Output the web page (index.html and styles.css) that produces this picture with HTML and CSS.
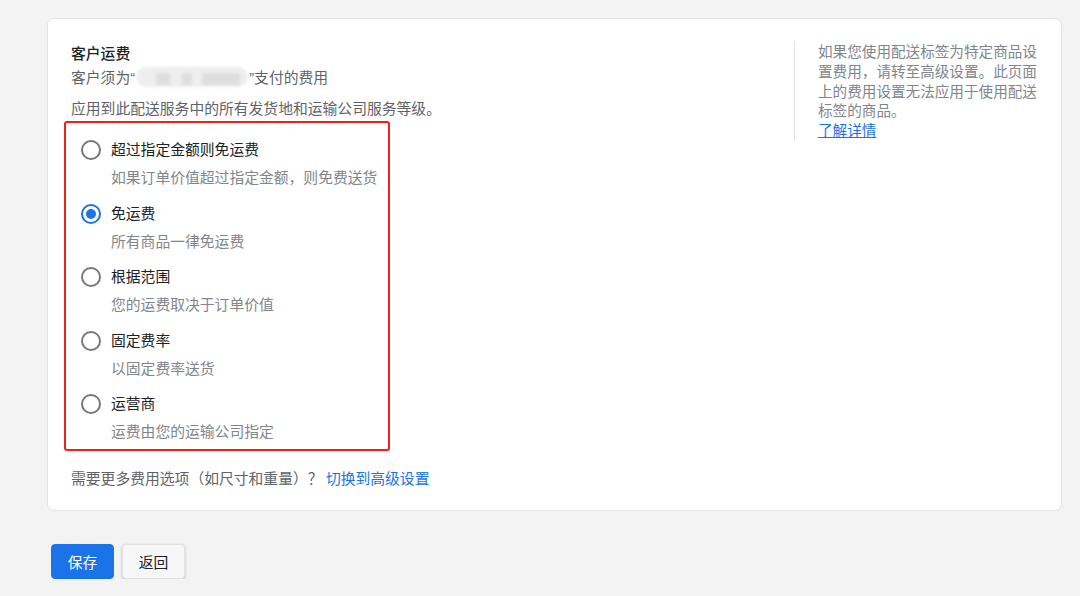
FILE: index.html
```html
<!DOCTYPE html>
<html lang="zh-CN">
<head>
    <meta charset="UTF-8">
    <title>客户运费</title>
    <link rel="stylesheet" href="styles.css">
</head>
<body>
    <div class="card">
        <div class="main">
            <h3 class="title">客户运费</h3>
            <p class="subtitle">客户须为<span class="q">“</span><span class="blur"><i></i><i></i><i></i></span><span class="q">”</span>支付的费用</p>
            <p class="note">应用到此配送服务中的所有发货地和运输公司服务等级。</p>

            <div class="options">
                <label class="option">
                    <span class="radio"></span>
                    <span class="text">
                        <span class="label">超过指定金额则免运费</span>
                        <span class="desc">如果订单价值超过指定金额，则免费送货</span>
                    </span>
                </label>
                <label class="option">
                    <span class="radio checked"></span>
                    <span class="text">
                        <span class="label">免运费</span>
                        <span class="desc">所有商品一律免运费</span>
                    </span>
                </label>
                <label class="option">
                    <span class="radio"></span>
                    <span class="text">
                        <span class="label">根据范围</span>
                        <span class="desc">您的运费取决于订单价值</span>
                    </span>
                </label>
                <label class="option">
                    <span class="radio"></span>
                    <span class="text">
                        <span class="label">固定费率</span>
                        <span class="desc">以固定费率送货</span>
                    </span>
                </label>
                <label class="option">
                    <span class="radio"></span>
                    <span class="text">
                        <span class="label">运营商</span>
                        <span class="desc">运费由您的运输公司指定</span>
                    </span>
                </label>
            </div>

            <p class="more">需要更多费用选项（如尺寸和重量）？ <a href="#">切换到高级设置</a></p>
        </div>

        <aside class="aside">
            如果您使用配送标签为特定商品设置费用，请转至高级设置。此页面上的费用设置无法应用于使用配送标签的商品。<br>
            <a href="#" class="learn">了解详情</a>
        </aside>
    </div>

    <div class="actions">
        <button class="btn primary">保存</button>
        <button class="btn">返回</button>
    </div>
</body>
</html>
```

FILE: styles.css
```css
* { box-sizing: border-box; margin: 0; padding: 0; }
body { background: #f3f3f3; font-family: "Noto Sans CJK SC", "Liberation Sans", sans-serif; font-size: 14.8px; color: #202124; }

.card { display: flex; margin: 18px 18px 0 47px; background: #fff; border: 1px solid #e3e3e3; border-radius: 7px;
        padding: 24px 18px 22px 23px; }
.main { flex: 1; }
.title { font-size: 14.8px; font-weight: 500; line-height: 20px; color: #202124; }
.subtitle { line-height: 20px; margin-top: 4px; color: #5f6368; }
.q { font-family: "Liberation Sans", sans-serif; }
.blur { display: inline-block; vertical-align: middle; width: 112px; height: 20px; margin: -3px 1px 0; background: #eeeeee;
        border-radius: 10px; filter: blur(1.5px); position: relative; }
.blur i { position: absolute; top: 6px; height: 12px; background: #dedede; }
.blur i:nth-child(1) { left: 20px; width: 14px; }
.blur i:nth-child(2) { left: 46px; width: 10px; }
.blur i:nth-child(3) { left: 66px; width: 38px; }
.note { line-height: 20px; margin-top: 10px; color: #5f6368; }

.options { margin: 3px 0 0 -7px; width: 326px; border: 2px solid #f0211b; border-radius: 3px; padding: 8px 0 0 15px; }
.option { display: flex; align-items: flex-start; padding: 8px 0 7.5px; cursor: pointer; }
.radio { width: 20px; height: 20px; border: 2px solid #777; border-radius: 50%; margin-top: 1px; flex-shrink: 0; position: relative; }
.radio.checked { border-color: #1a73e8; }
.radio.checked::after { content: ""; position: absolute; left: 3px; top: 3px; width: 10px; height: 10px; border-radius: 50%; background: #1a73e8; }
.text { display: flex; flex-direction: column; margin-left: 10px; }
.label { line-height: 20px; color: #202124; }
.desc { line-height: 20px; margin-top: 8px; color: #80868b; }

.more { margin-top: 17px; line-height: 20px; color: #5f6368; }
.more a, .learn { color: #1a73e8; text-decoration: none; }

.aside { width: 249px; align-self: flex-start; margin-top: -2px; border-left: 1px solid #e0e0e0; padding-left: 23px;
         font-size: 14.6px; line-height: 19.8px; color: #80868b; }
.aside .learn { text-decoration: underline; }

.actions { display: flex; gap: 8px; margin: 33px 0 0 51px; }
.btn { width: 63px; height: 35px; border: 1px solid #e2e2e2; border-radius: 4px; background: #f7f7f7; color: #202124;
       font-family: inherit; font-size: 14.8px; box-shadow: 0 1px 3px rgba(0,0,0,0.22); cursor: pointer; }
.btn.primary { background: #1a73e8; border-color: #1a73e8; color: #fff; box-shadow: none; }
```
